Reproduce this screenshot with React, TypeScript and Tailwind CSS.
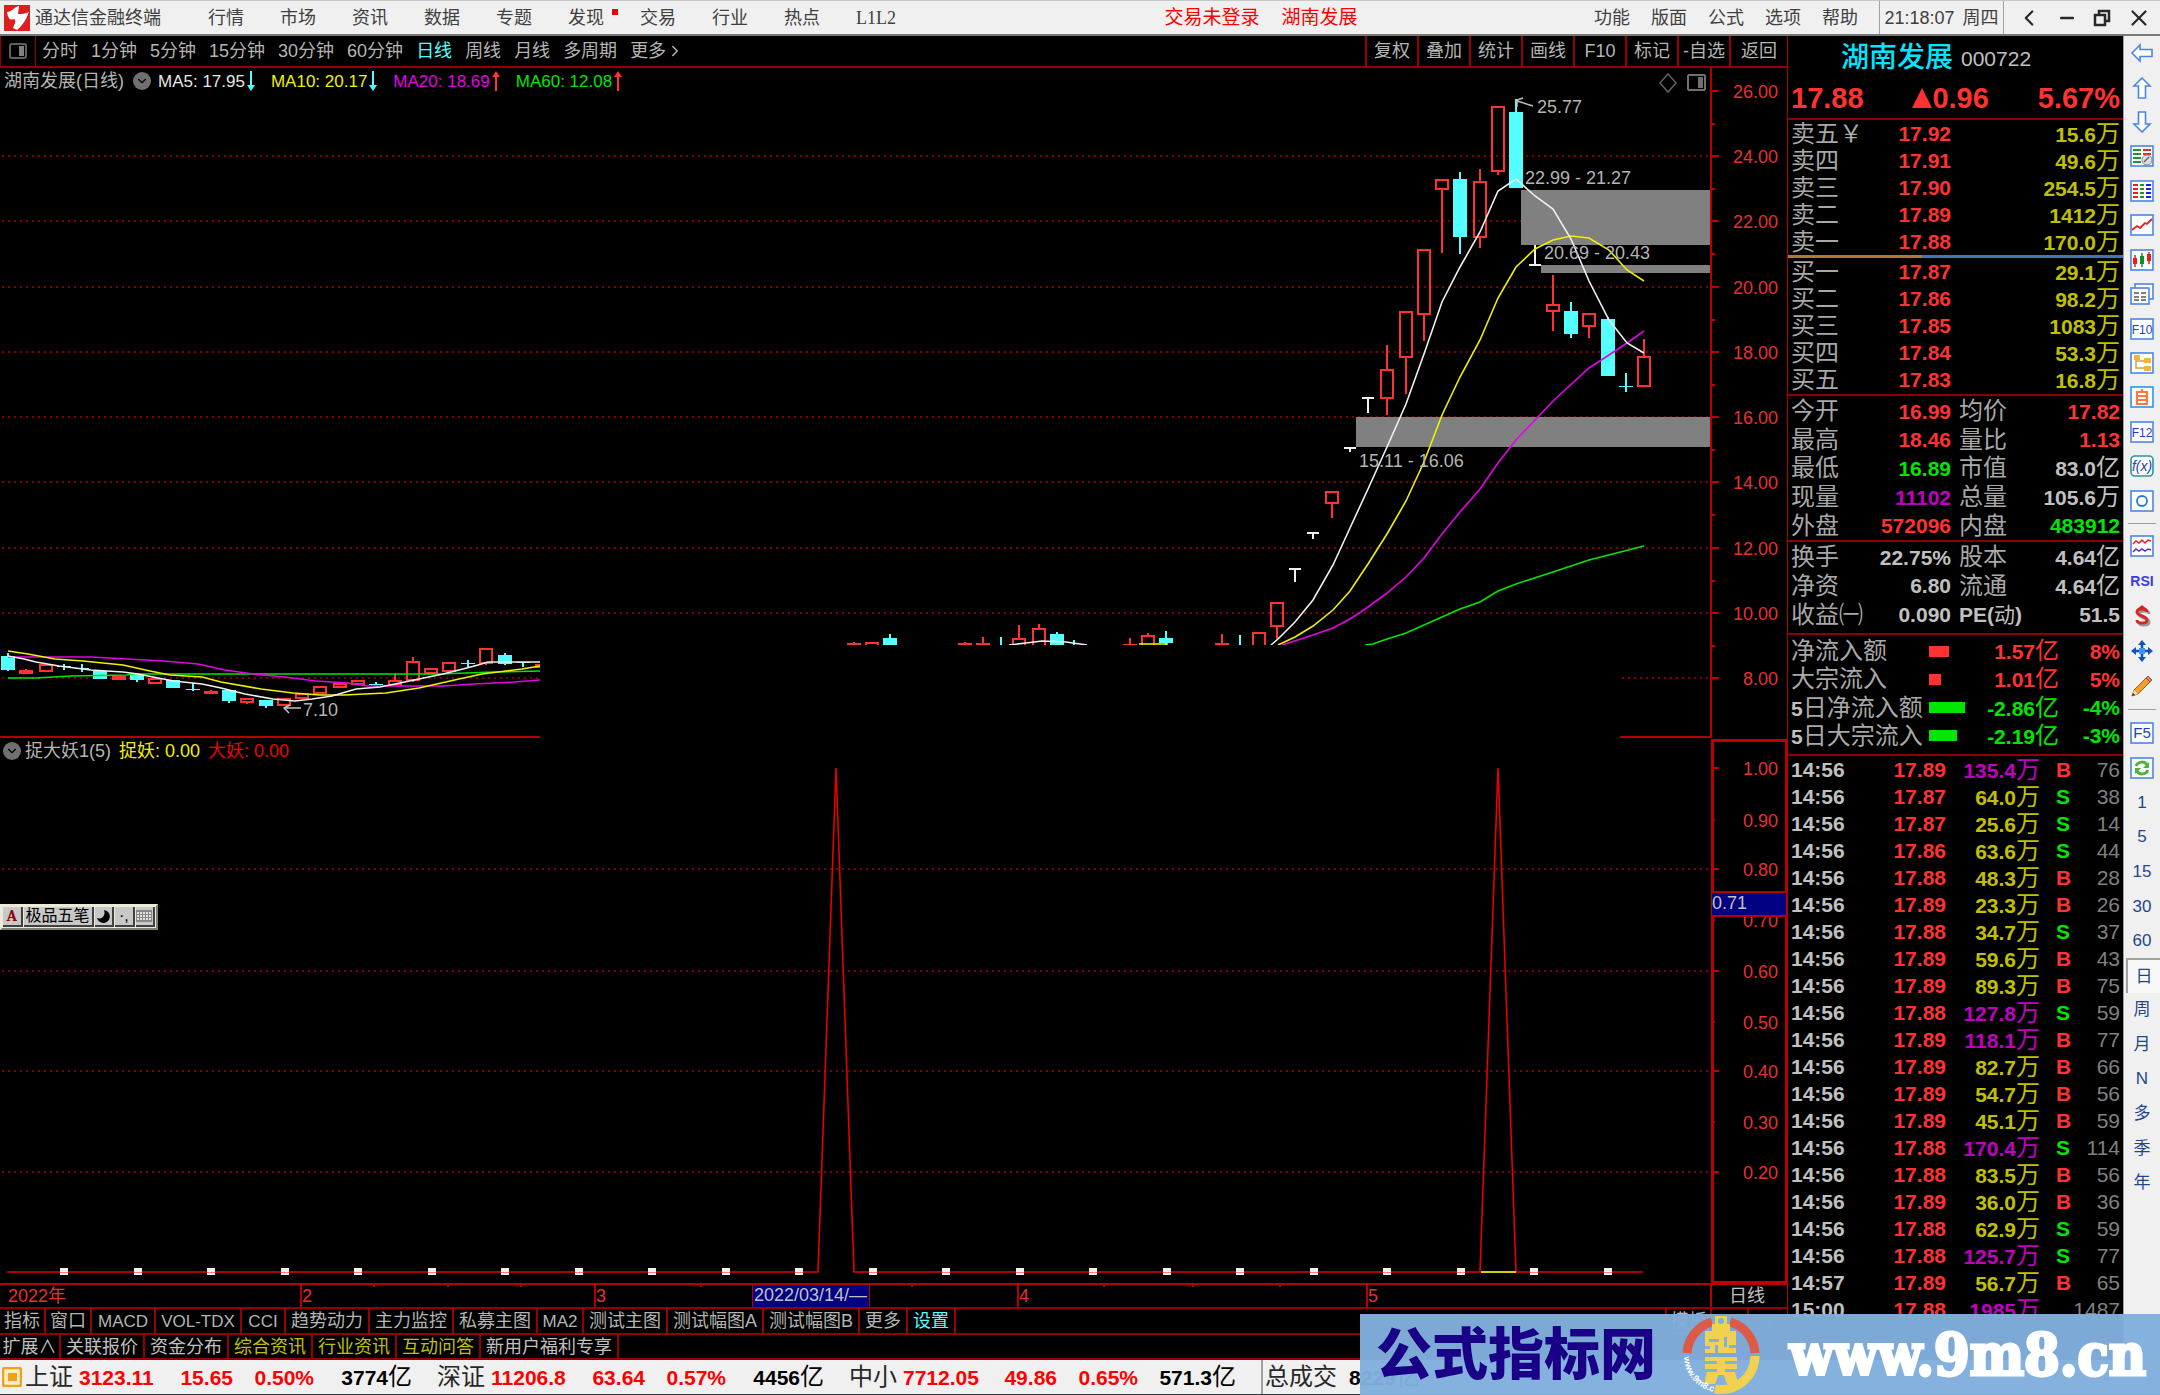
import type { ReactNode } from 'react';
import { ChevronDown, ChevronLeft, ChevronRight, Minus, X } from 'lucide-react';

const menus = ['行情', '市场', '资讯', '数据', '专题', '发现', '交易', '行业', '热点', 'L1L2'];
const rightMenus = ['功能', '版面', '公式', '选项', '帮助'];
const periods = ['分时', '1分钟', '5分钟', '15分钟', '30分钟', '60分钟', '日线', '周线', '月线', '多周期'];
const tools = ['复权', '叠加', '统计', '画线', 'F10', '标记', '-自选', '返回'];

const averages = [
  { text: 'MA5: 17.95', color: 'text-[#e6e6e6]', up: false },
  { text: 'MA10: 20.17', color: 'text-[#f0f000]', up: false },
  { text: 'MA20: 18.69', color: 'text-[#e600e6]', up: true },
  { text: 'MA60: 12.08', color: 'text-[#00e600]', up: true },
];

const asks = [
  ['卖五￥', '17.92', '15.6万'],
  ['卖四', '17.91', '49.6万'],
  ['卖三', '17.90', '254.5万'],
  ['卖二', '17.89', '1412万'],
  ['卖一', '17.88', '170.0万'],
];
const bids = [
  ['买一', '17.87', '29.1万'],
  ['买二', '17.86', '98.2万'],
  ['买三', '17.85', '1083万'],
  ['买四', '17.84', '53.3万'],
  ['买五', '17.83', '16.8万'],
];

const RED = 'text-[#ff3232]';
const GREEN = 'text-[#00e600]';
const PURPLE = 'text-[#c000c0]';
const YELLOW = 'text-[#c0c000]';
const GRAY = 'text-[#c0c0c0]';

const quotes = [
  ['今开', '16.99', RED, '均价', '17.82', RED],
  ['最高', '18.46', RED, '量比', '1.13', RED],
  ['最低', '16.89', GREEN, '市值', '83.0亿', GRAY],
  ['现量', '11102', PURPLE, '总量', '105.6万', GRAY],
  ['外盘', '572096', RED, '内盘', '483912', GREEN],
];
const basics = [
  ['换手', '22.75%', GRAY, '股本', '4.64亿', GRAY],
  ['净资', '6.80', GRAY, '流通', '4.64亿', GRAY],
  ['收益㈠', '0.090', GRAY, 'PE(动)', '51.5', GRAY],
];
const flows = [
  { name: '净流入额', bar: 'w-5 bg-[#ff3232]', value: '1.57亿', pct: '8%', color: RED },
  { name: '大宗流入', bar: 'w-3 bg-[#ff3232]', value: '1.01亿', pct: '5%', color: RED },
  { name: '5日净流入额', bar: 'w-9 bg-[#00e600]', value: '-2.86亿', pct: '-4%', color: GREEN },
  { name: '5日大宗流入', bar: 'w-7 bg-[#00e600]', value: '-2.19亿', pct: '-3%', color: GREEN },
];

const ticks: [string, string, string, string, number][] = [
  ['14:56', '17.89', '135.4万', 'B', 76],
  ['14:56', '17.87', '64.0万', 'S', 38],
  ['14:56', '17.87', '25.6万', 'S', 14],
  ['14:56', '17.86', '63.6万', 'S', 44],
  ['14:56', '17.88', '48.3万', 'B', 28],
  ['14:56', '17.89', '23.3万', 'B', 26],
  ['14:56', '17.88', '34.7万', 'S', 37],
  ['14:56', '17.89', '59.6万', 'B', 43],
  ['14:56', '17.89', '89.3万', 'B', 75],
  ['14:56', '17.88', '127.8万', 'S', 59],
  ['14:56', '17.89', '118.1万', 'B', 77],
  ['14:56', '17.89', '82.7万', 'B', 66],
  ['14:56', '17.89', '54.7万', 'B', 56],
  ['14:56', '17.89', '45.1万', 'B', 59],
  ['14:56', '17.88', '170.4万', 'S', 114],
  ['14:56', '17.88', '83.5万', 'B', 56],
  ['14:56', '17.89', '36.0万', 'B', 36],
  ['14:56', '17.88', '62.9万', 'S', 59],
  ['14:56', '17.88', '125.7万', 'S', 77],
  ['14:57', '17.89', '56.7万', 'B', 65],
  ['15:00', '17.88', '1985万', '', 1487],
];

const tabs = [
  { name: '指标', w: 'w-[46px]' },
  { name: '窗口', w: 'w-[46px]' },
  { name: 'MACD', w: 'w-16' },
  { name: 'VOL-TDX', w: 'w-[86px]' },
  { name: 'CCI', w: 'w-11' },
  { name: '趋势动力', w: 'w-[84px]' },
  { name: '主力监控', w: 'w-[84px]' },
  { name: '私募主图', w: 'w-[84px]' },
  { name: 'MA2', w: 'w-[46px]' },
  { name: '测试主图', w: 'w-[84px]' },
  { name: '测试幅图A', w: 'w-24' },
  { name: '测试幅图B', w: 'w-24' },
  { name: '更多', w: 'w-12' },
  { name: '设置', w: 'w-12' },
];
const links = [
  { name: '扩展∧', w: 'w-[61px]', color: 'text-[#c0c0c0]' },
  { name: '关联报价', w: 'w-[84px]', color: 'text-[#c0c0c0]' },
  { name: '资金分布', w: 'w-[84px]', color: 'text-[#c0c0c0]' },
  { name: '综合资讯', w: 'w-[84px]', color: 'text-[#c0c000]' },
  { name: '行业资讯', w: 'w-[84px]', color: 'text-[#c0c000]' },
  { name: '互动问答', w: 'w-[84px]', color: 'text-[#c0c000]' },
  { name: '新用户福利专享', w: 'w-[138px]', color: 'text-[#c0c0c0]' },
];
const indexes = [
  { name: '上证', price: '3123.11', change: '15.65', pct: '0.50%', amount: '3774亿' },
  { name: '深证', price: '11206.8', change: '63.64', pct: '0.57%', amount: '4456亿' },
  { name: '中小', price: '7712.05', change: '49.86', pct: '0.65%', amount: '571.3亿' },
];

// [type, x, open/close top, bottom, high, low]
type Candle = ['r' | 'c', number, number, number, number, number];
const candles: Candle[] = [
  ['c', 8, 655, 669, 652, 670],
  ['r', 26, 670, 672, 668, 672],
  ['r', 46, 664, 670, 664, 670],
  ['c', 64, 665, 666, 663, 669],
  ['c', 82, 667, 668, 663, 671],
  ['c', 100, 670, 678, 670, 678],
  ['r', 119, 676, 678, 676, 678],
  ['c', 137, 673, 679, 673, 681],
  ['r', 155, 678, 682, 677, 682],
  ['c', 173, 679, 687, 679, 687],
  ['c', 193, 688, 689, 682, 690],
  ['r', 211, 691, 692, 689, 692],
  ['c', 229, 689, 700, 689, 702],
  ['r', 247, 698, 701, 698, 703],
  ['c', 266, 699, 705, 699, 707],
  ['r', 284, 698, 704, 698, 704],
  ['r', 302, 693, 697, 693, 697],
  ['r', 320, 686, 692, 686, 692],
  ['r', 340, 683, 686, 682, 686],
  ['r', 358, 680, 683, 680, 683],
  ['c', 376, 683, 684, 681, 684],
  ['r', 395, 680, 684, 673, 684],
  ['r', 413, 661, 679, 656, 681],
  ['r', 431, 668, 672, 668, 672],
  ['r', 449, 662, 670, 662, 670],
  ['c', 468, 662, 663, 659, 667],
  ['r', 486, 648, 662, 647, 664],
  ['c', 505, 654, 663, 652, 664],
  ['c', 523, 661, 662, 661, 666],
  ['r', 542, 664, 666, 664, 666],
  ['r', 854, 643, 660, 641, 660],
  ['r', 872, 642, 660, 642, 660],
  ['c', 890, 637, 644, 633, 644],
  ['r', 965, 643, 660, 641, 660],
  ['r', 983, 643, 660, 636, 660],
  ['c', 1001, 644, 660, 636, 660],
  ['r', 1019, 638, 660, 624, 660],
  ['r', 1039, 628, 660, 623, 660],
  ['c', 1057, 633, 660, 631, 660],
  ['c', 1074, 644, 660, 639, 660],
  ['r', 1130, 644, 660, 637, 660],
  ['r', 1148, 635, 660, 632, 660],
  ['c', 1166, 637, 642, 630, 644],
  ['r', 1222, 643, 660, 633, 660],
  ['c', 1240, 644, 660, 634, 660],
  ['r', 1259, 632, 660, 632, 660],
  ['r', 1277, 602, 625, 602, 638],
  ['r', 1332, 491, 502, 491, 517],
  ['r', 1387, 369, 397, 344, 414],
  ['r', 1406, 311, 356, 311, 393],
  ['r', 1424, 249, 313, 249, 340],
  ['r', 1442, 179, 188, 179, 252],
  ['c', 1460, 178, 236, 171, 253],
  ['r', 1480, 181, 236, 168, 247],
  ['r', 1498, 106, 170, 106, 174],
  ['c', 1516, 111, 187, 98, 187],
  ['r', 1553, 304, 310, 274, 330],
  ['c', 1571, 310, 333, 301, 337],
  ['r', 1589, 313, 325, 313, 337],
  ['c', 1608, 318, 375, 316, 375],
  ['c', 1626, 385, 386, 372, 391],
  ['r', 1644, 356, 385, 338, 386],
];

const maLines = [
  {
    color: '#00e600',
    points: [
      '8,677 36,677 71,675 127,674 131,673 439,673 494,671 540,670',
      '1365,644 1373,643 1387,638 1406,632 1442,616 1460,608 1480,601 1498,590 1516,583 1553,571 1589,559 1644,545',
    ],
  },
  {
    color: '#e600e6',
    points: [
      '8,656 91,656 127,658 164,660 198,663 225,669 253,673 285,676 316,680 348,682 368,685 443,685 474,683 514,681 540,679',
      '1282,644 1307,636 1333,627 1350,618 1368,606 1387,592 1406,576 1424,557 1442,533 1460,511 1480,488 1498,462 1516,439 1553,400 1589,367 1609,354 1627,342 1644,330',
    ],
  },
  {
    color: '#f0f000',
    points: [
      '8,650 28,653 55,658 83,660 123,664 150,670 170,674 202,676 221,681 261,688 293,692 320,694 344,694 386,692 419,687 459,678 482,673 522,668 540,665',
      '1139,643 1168,643',
      '1278,644 1295,636 1313,625 1333,609 1350,590 1368,563 1387,533 1406,500 1424,461 1442,414 1460,376 1480,339 1498,297 1516,266 1535,248 1553,239 1571,235 1589,237 1609,249 1627,269 1644,280',
    ],
  },
  {
    color: '#f0f0f0',
    points: [
      '8,655 24,658 36,661 59,665 91,669 123,671 138,673 158,677 174,680 202,683 221,687 245,693 273,698 295,700 312,698 332,695 356,688 380,686 395,683 419,678 443,673 463,668 478,664 488,661 540,661',
      '1009,644 1026,642 1042,640 1066,641 1087,644',
      '1271,644 1278,638 1295,621 1313,599 1333,564 1350,527 1368,488 1387,446 1406,403 1424,353 1442,301 1460,266 1480,231 1498,190 1516,178 1535,195 1553,208 1571,238 1589,280 1609,319 1627,342 1644,352',
    ],
  },
];

const prices = [26, 24, 22, 20, 18, 16, 14, 12, 10, 8].map((p, i) => ({
  label: p.toFixed(2),
  y: Math.round(90 + (i * 587) / 9),
}));
const levels = [
  ['1.00', 767],
  ['0.90', 819],
  ['0.80', 868],
  ['0.70', 919],
  ['0.60', 970],
  ['0.50', 1021],
  ['0.40', 1070],
  ['0.30', 1121],
  ['0.20', 1171],
] as const;

const svgText = "'Liberation Sans','Noto Sans CJK SC',sans-serif";

function PriceChart() {
  return (
    <svg viewBox="0 67 1787 670" className="block w-full h-auto" fontFamily={svgText} fontSize="18" shapeRendering="crispEdges">
      {/* 网格与坐标 */}
      {prices.map((p, i) => (
        <g key={p.label}>
          {i > 0 && <path d={`M2 ${p.y}H1711`} stroke="#820000" strokeWidth="2" strokeDasharray="2 4" />}
          <path d={`M1711 ${p.y}h8`} stroke="#c00000" strokeWidth="2" />
          {i < 9 && <path d={`M1711 ${p.y + 33}h4`} stroke="#c00000" strokeWidth="2" />}
          <text x="1778" y={p.y + 7} textAnchor="end" fill="#e63030">{p.label}</text>
        </g>
      ))}

      {/* 缺口 */}
      <rect x="1521" y="189" width="190" height="55" fill="#808080" />
      <rect x="1541" y="264" width="170" height="8" fill="#808080" />
      <rect x="1356" y="416" width="355" height="30" fill="#808080" />

      {candles.map(([type, x, top, bottom, high, low]) =>
        type === 'r' ? (
          <g key={x} stroke="#ff3232" strokeWidth="2" fill="none">
            <path d={`M${x} ${high}V${top}M${x} ${bottom}V${low}`} />
            <rect x={x - 6} y={top} width="12" height={bottom - top} />
          </g>
        ) : (
          <g key={x} fill="#54ffff">
            <rect x={x - 1} y={high} width="2" height={low - high} />
            <rect x={x - 7} y={top} width="14" height={bottom - top} />
          </g>
        )
      )}
      <path
        d="M1289 568h12M1295 568v13M1307 532h12M1313 532v6M1344 447h12M1350 447v4M1362 397h12M1368 397v15M1529 264h12M1535 264v-20"
        stroke="#f0f0f0"
        strokeWidth="2"
      />

      <g fill="none" strokeWidth="1.6" shapeRendering="auto">
        {maLines.map((line) =>
          line.points.map((points) => <polyline key={points} points={points} stroke={line.color} />)
        )}
      </g>

      {/* 遮挡区 */}
      <rect x="540" y="644" width="1080" height="93" fill="#000" />
      <path d="M0 736H540M1620 736H1711" stroke="#b40000" strokeWidth="2" />
      <path d="M1711 67V737" stroke="#b40000" strokeWidth="2" />

      <g fill="#b4b4b4">
        <text x="1537" y="112">25.77</text>
        <text x="1525" y="183">22.99 - 21.27</text>
        <text x="1544" y="258">20.69 - 20.43</text>
        <text x="1359" y="466">15.11 - 16.06</text>
        <text x="303" y="715">7.10</text>
      </g>
      <g stroke="#c0c0c0" strokeWidth="1.5" fill="none" shapeRendering="auto">
        <path d="M1533 105L1517 100M1523 97L1517 99V106" />
        <path d="M301 707H285M289 712L284 707L290 704" />
      </g>
      <path d="M1668 73l8 9-8 9-8-9z" fill="none" stroke="#606060" strokeWidth="1.5" shapeRendering="auto" />
      <rect x="1688" y="74" width="17" height="15" rx="2" fill="none" stroke="#707070" strokeWidth="2" />
      <rect x="1698" y="76" width="5" height="11" fill="#707070" />
    </svg>
  );
}

function SignalChart() {
  return (
    <svg viewBox="0 737 1787 545" className="block w-full h-auto" fontFamily={svgText} fontSize="18" shapeRendering="crispEdges">
      {levels.map(([label, y], i) => (
        <g key={label}>
          {i > 0 && i % 2 === 0 && <path d={`M2 ${y}H1711`} stroke="#820000" strokeWidth="2" strokeDasharray="2 4" />}
          <path d={`M1711 ${y}h${i % 2 === 0 ? 8 : 4}`} stroke="#c00000" strokeWidth="2" />
          <text x="1778" y={y + 7} textAnchor="end" fill="#e63030">{label}</text>
        </g>
      ))}
      <rect x="1712" y="739" width="74" height="542" fill="none" stroke="#c00000" strokeWidth="3" />

      <path
        d="M7 1271H818L836 767L854 1271H1480L1498 767L1516 1271H1643"
        fill="none"
        stroke="#e60000"
        strokeWidth="1.6"
        shapeRendering="auto"
      />
      <path d="M1481 1271H1516" stroke="#d2d200" strokeWidth="2" />
      {Array.from({ length: 22 }, (_, i) => {
        const x = Math.round(60 + i * 73.5);
        return (
          <g key={i}>
            <rect x={x} y="1267" width="8" height="7" fill="#f0f0f0" />
            <path d={`M${x} 1271h8`} stroke="#ff8080" />
          </g>
        );
      })}

      <rect x="1712" y="891" width="74" height="24" fill="#000080" />
      <path d="M1712 891H1786M1712 915H1786" stroke="#b40000" strokeWidth="2" />
      <text x="1712" y="908" fill="#c0c0c0">0.71</text>
    </svg>
  );
}

function DateAxis() {
  const months = [
    ['2', 301],
    ['3', 595],
    ['4', 1018],
    ['5', 1367],
  ] as const;
  return (
    <svg viewBox="0 1282 1787 24" className="block w-full h-auto" fontFamily={svgText} fontSize="18" shapeRendering="crispEdges">
      <path d="M0 1283H1787" stroke="#b40000" strokeWidth="2" />
      <text x="8" y="1301" fill="#e63030">2022年</text>
      {months.map(([label, x]) => (
        <g key={label}>
          <path d={`M${x} 1282V1306`} stroke="#b40000" strokeWidth="2" />
          <text x={x + 1} y="1301" fill="#e63030">{label}</text>
        </g>
      ))}
      <path d="M374 1283v3M448 1283v3M521 1283v3M701 1283v3M912 1283v3M1104 1283v3M1193 1283v3M1280 1283v3" stroke="#b40000" strokeWidth="2" />
      <rect x="752" y="1283" width="117" height="23" fill="#000080" stroke="#b40000" />
      <text x="754" y="1300" fill="#c0c0c0">2022/03/14/—</text>
      <path d="M1711 1282V1306" stroke="#b40000" strokeWidth="2" />
      <text x="1729" y="1301" fill="#c0c0c0">日线</text>
    </svg>
  );
}

// 数字加粗, 汉字单位用常规字重
function Amount({ text }: { text: string }) {
  const unit = /[万亿]$/.test(text) ? text.slice(-1) : '';
  return (
    <>
      {unit ? text.slice(0, -1) : text}
      {unit && <span className="font-normal text-[24px]">{unit}</span>}
    </>
  );
}

function OrderTable({ rows }: { rows: string[][] }) {
  return (
    <table className="w-full table-fixed">
      <tbody>
        {rows.map(([name, price, amount]) => (
          <tr key={name} className="h-[27px]">
            <th className="w-[100px] p-0 text-left font-normal text-[24px] text-[#a8a8a8]">{name}</th>
            <td className="w-[60px] p-0 text-right text-[#ff3232]">{price}</td>
            <td className="p-0 text-right text-[#c0c000]"><Amount text={amount} /></td>
          </tr>
        ))}
      </tbody>
    </table>
  );
}

function QuoteGrid({ rows }: { rows: string[][] }) {
  return (
    <>
      {rows.map(([a, av, ac, b, bv, bc]) => (
        <div key={a} className="flex items-center">
          <div className="flex w-40 items-center justify-between">
            <span className="font-normal text-[24px] text-[#a8a8a8]">{a}</span>
            <span className={ac}>{av}</span>
          </div>
          <div className="flex flex-1 items-center justify-between pl-2">
            {b.startsWith('PE') ? (
              <span className="text-[#c0c0c0]">PE(<span className="font-normal">动</span>)</span>
            ) : (
              <span className="font-normal text-[24px] text-[#a8a8a8]">{b}</span>
            )}
            <span className={bc}><Amount text={bv} /></span>
          </div>
        </div>
      ))}
    </>
  );
}

function QuotePanel() {
  return (
    <aside className="w-[335px] shrink-0 overflow-hidden bg-black text-[21px] leading-none font-bold">
      <header className="h-[84px] border-b-2 border-[#8c0000] px-[3px]">
        <div className="flex h-11 items-center gap-2 pl-[50px]">
          <h1 className="text-[28px] leading-none font-medium text-[#00e6ff]">湖南发展</h1>
          <span className="text-[21px] font-normal text-[#c0c0c0]">000722</span>
        </div>
        <div className="flex h-[36px] items-center justify-between text-[29px] text-[#ff3232]">
          <span>17.88</span>
          <span className="flex items-center">
            <svg viewBox="0 0 20 20" className="h-5 w-5"><path d="M10 0L20 20H0z" fill="#ff3232" /></svg>
            0.96
          </span>
          <span>5.67%</span>
        </div>
      </header>
      <div className="px-[3px]"><OrderTable rows={asks} /></div>
      <div className="flex h-[3px]">
        <div className="w-2/5 bg-[#b4782d]" />
        <div className="flex-1 bg-[#3c78b4]" />
      </div>
      <div className="px-[3px]"><OrderTable rows={bids} /></div>
      <section className="mt-px grid h-[146px] grid-rows-5 border-t-2 border-[#8c0000] px-[3px] pt-px">
        <QuoteGrid rows={quotes} />
      </section>
      <section className="grid h-[93px] grid-rows-3 border-t-2 border-[#8c0000] px-[3px] pt-px pb-1">
        <QuoteGrid rows={basics} />
      </section>
      <section className="grid h-[121px] grid-rows-4 border-t-2 border-[#8c0000] px-[3px] pt-0.5 pb-1">
        {flows.map((f) => (
          <div key={f.name} className={`flex items-center ${f.color}`}>
            <span className="w-[138px] whitespace-nowrap text-[24px] font-normal text-[#a8a8a8]">
              {f.name.startsWith('5') && <span className="text-[21px] font-bold text-[#c0c0c0]">5</span>}
              {f.name.replace('5', '')}
            </span>
            <span className={`h-[11px] ${f.bar}`} />
            <span className="ml-auto w-[90px] text-right"><Amount text={f.value} /></span>
            <span className="w-[61px] text-right">{f.pct}</span>
          </div>
        ))}
      </section>
      <div className="border-t-2 border-[#8c0000] px-[3px]">
        <table className="w-full table-fixed">
          <tbody>
            {ticks.map(([time, price, amount, side, count], i) => (
              <tr key={i} className="h-[27px]">
                <td className="w-20 p-0 text-[#c0c0c0]">{time}</td>
                <td className="w-[75px] p-0 text-right text-[#ff3232]">{price}</td>
                <td className={`w-[94px] p-0 text-right ${parseFloat(amount) > 100 ? PURPLE : YELLOW}`}>
                  <Amount text={amount} />
                </td>
                <td className={`w-8 p-0 pl-4 ${side === 'B' ? RED : GREEN}`}>{side}</td>
                <td className="p-0 text-right font-normal text-[#808080]">{count}</td>
              </tr>
            ))}
          </tbody>
        </table>
      </div>
    </aside>
  );
}

function Box({ children, color = '#4a86e8' }: { children?: ReactNode; color?: string }) {
  return (
    <svg viewBox="0 0 24 22" className="h-[22px] w-6" fill="none">
      <rect x="1" y="1" width="22" height="20" fill="#fff" stroke={color} strokeWidth="1.6" />
      {children}
    </svg>
  );
}

function BoxText({ text }: { text: string }) {
  return (
    <Box>
      <text x="12" y="16" textAnchor="middle" fontSize={text.length > 2 ? 12 : 15} fill="#1e3cc8" fontFamily={svgText}>{text}</text>
    </Box>
  );
}

function Arrow({ rotate }: { rotate: string }) {
  return (
    <svg viewBox="0 0 24 24" className={`h-6 w-6 ${rotate}`}>
      <path d="M2 12L10 4V8.500H22V15.500H10V20z" fill="#fff" stroke="#4a86e8" strokeWidth="1.6" />
    </svg>
  );
}

const topIcons: [string, ReactNode][] = [
  ['后退', <Arrow rotate="rotate-0" />],
  ['上一只', <Arrow rotate="rotate-90" />],
  ['下一只', <Arrow rotate="-rotate-90" />],
  ['报价', <Box>
    <path d="M3 5h8M3 9h8M3 13h8M3 17h8" stroke="#1e9632" strokeWidth="2" />
    <path d="M13 5h8M13 9h8" stroke="#e62828" strokeWidth="2" />
    <circle cx="17" cy="15" r="5" fill="#ddd" stroke="#888" />
    <path d="M14 17l5-5" stroke="#666" strokeWidth="1.5" />
  </Box>],
  ['多股', <Box>
    <path d="M3 5h5M3 9h5M3 13h5M3 17h5" stroke="#e61e1e" strokeWidth="2" />
    <path d="M10 5h4M10 9h4M10 13h4M10 17h4" stroke="#1e961e" strokeWidth="2" />
    <path d="M16 5h5M16 9h5M16 13h5M16 17h5" stroke="#1e1ee6" strokeWidth="2" />
  </Box>],
  ['分时图', <Box><path d="M2 16L7 12L10 14L15 9L17 10L22 5" stroke="#e61e1e" strokeWidth="1.8" /></Box>],
  ['K线图', <Box>
    <path d="M5 6v12M19 3v12" stroke="#e61e1e" strokeWidth="1.5" />
    <path d="M12 4v14" stroke="#148c28" strokeWidth="1.5" />
    <rect x="3" y="9" width="4" height="6" fill="#e61e1e" />
    <rect x="10" y="7" width="4" height="8" fill="#148c28" />
    <rect x="17" y="5" width="4" height="7" fill="#e61e1e" />
  </Box>],
  ['资料', <svg viewBox="0 0 24 22" className="h-[22px] w-6" fill="#fff" stroke="#4a86e8" strokeWidth="1.6">
    <rect x="5" y="1" width="18" height="15" />
    <rect x="1" y="5" width="18" height="16" />
    <path d="M4 10h5M11 10h5M4 14h5M11 14h5M4 17h5M11 17h5" stroke="#555" />
  </svg>],
  ['F10', <BoxText text="F10" />],
  ['板块', <Box>
    <path d="M6 6V16H14M6 9H14" stroke="#dca03c" strokeWidth="1.5" />
    <rect x="4" y="3" width="6" height="5" fill="#f0b43c" />
    <rect x="14" y="6" width="7" height="5" fill="#f0b43c" />
    <rect x="14" y="14" width="7" height="5" fill="#f0b43c" />
  </Box>],
  ['自选', <Box color="#2896f0">
    <path d="M12 3V6M7 6H17V18H7zM7 10H17M7 14H17" stroke="#ff783c" strokeWidth="2.200" />
  </Box>],
  ['F12', <BoxText text="F12" />],
  ['公式', <svg viewBox="0 0 24 22" className="h-[22px] w-6">
    <rect x="1" y="1" width="22" height="20" rx="4" fill="#fff" stroke="#289696" strokeWidth="1.6" />
    <text x="12" y="16" textAnchor="middle" fontSize="14" fontStyle="italic" fill="#1e3cc8" fontFamily={svgText}>f(x)</text>
  </svg>],
  ['区间', <Box><circle cx="12" cy="11" r="5" stroke="#2878d2" strokeWidth="1.8" /></Box>],
];

const midIcons: [string, ReactNode][] = [
  ['叠加', <Box>
    <path d="M3 9L6 6L9 8L12 5L15 8L18 5L21 6" stroke="#e61e1e" strokeWidth="1.5" />
    <path d="M3 17L6 14L9 16L12 14L15 16L18 14L21 15" stroke="#5a28dc" strokeWidth="1.5" />
  </Box>],
  ['RSI', <span className="text-[14px] font-bold text-[#3c3cdc]">RSI</span>],
  ['资金', <svg viewBox="0 0 24 24" className="h-6 w-6" fill="none" strokeWidth="3">
    <path d="M19 10C19 6 9 6 9 10S19 14 19 18S9 22 9 18" stroke="#999" />
    <path d="M17 8C17 4 7 4 7 8S17 12 17 16S7 20 7 16" stroke="#d22828" />
    <path d="M7 5L12 1L17 5z" fill="#d22828" />
  </svg>],
  ['移动', <svg viewBox="0 0 24 24" className="h-6 w-6" fill="#1450b4">
    <path d="M12 1l4 5H8zM12 23l4-5H8zM1 12l5-4v8zM23 12l-5-4v8z" />
    <path d="M12 5v14M5 12h14" stroke="#1450b4" strokeWidth="2.500" />
    <rect x="9" y="9" width="6" height="6" fill="#3c96f0" />
  </svg>],
  ['画笔', <svg viewBox="0 0 24 24" className="h-6 w-6">
    <path d="M2 22L4 16L16 4L20 8L8 20z" fill="#f0a028" stroke="#96601e" />
    <path d="M16 4L18 2L22 6L20 8z" fill="#e67878" stroke="#a05050" />
    <path d="M2 22L4 16L8 20z" fill="#f5dcb4" />
    <path d="M2 22l1-3 2 2z" fill="#222" />
  </svg>],
];

const lowIcons: [string, ReactNode][] = [
  ['F5', <BoxText text="F5" />],
  ['刷新', <Box>
    <path d="M6 9C8 4 15 4 17 8M18 13C16 18 9 18 7 14" stroke="#50b43c" strokeWidth="3" />
    <path d="M19 5V11H13zM5 17V11H11z" fill="#50b43c" />
  </Box>],
];
const periodKeys = ['1', '5', '15', '30', '60', '日', '周', '月', 'N', '多', '季', '年'];

function IconBar() {
  const cell = 'flex min-h-0 items-center justify-center';
  return (
    <nav className="w-[37px] shrink-0 overflow-hidden border-l border-[#a0a0a0] bg-[#f0f0f0] text-[#1e468c]">
      <div className="grid h-[482px] auto-rows-fr">
        {topIcons.map(([label, icon]) => (
          <button key={label} aria-label={label} className={cell}>{icon}</button>
        ))}
      </div>
      <div className="mx-1 my-[5px] h-px bg-[#a0a0a0]" />
      <div className="grid h-[174px] auto-rows-fr">
        {midIcons.map(([label, icon]) => (
          <button key={label} aria-label={label} className={cell}>{icon}</button>
        ))}
      </div>
      <div className="mx-1 my-[6px] h-px bg-[#a0a0a0]" />
      <div className="grid h-[484px] auto-rows-fr text-[17px]">
        {lowIcons.map(([label, icon]) => (
          <button key={label} aria-label={label} className={cell}>{icon}</button>
        ))}
        {periodKeys.map((key) => (
          <button
            key={key}
            className={`${cell} ${key === '日' ? 'ml-0.5 border-l-2 border-t-2 border-[#a0a0a0] bg-[#f8f8f8]' : ''}`}
          >
            {key}
          </button>
        ))}
      </div>
    </nav>
  );
}

function CircleDown() {
  return (
    <button aria-label="展开" className="flex h-[18px] w-[18px] items-center justify-center rounded-full bg-[#707070] text-black">
      <ChevronDown size={14} />
    </button>
  );
}

function InputMethodBar() {
  const key = 'flex h-5 items-center justify-center border-r-2 border-b-2 border-[#404040] bg-[#c8c8c8]';
  return (
    <div className="absolute left-0 top-[836px] flex w-[158px] items-center gap-px border-2 border-[#ece9d8] border-r-[#808070] border-b-[#808070] bg-[#ece9d8] p-px text-black">
      <button className={`${key} w-5 font-serif text-[16px] font-bold text-[#8c0000]`}>A</button>
      <button className={`${key} w-[72px] text-[16px]`}>极品五笔</button>
      <button aria-label="半角" className={`${key} w-5`}>
        <svg viewBox="0 0 14 14" className="h-3.5 w-3.5"><path d="M8 1A6.500 6.500 0 1 1 1 9C6 11 10 6 8 1z" /></svg>
      </button>
      <button className={`${key} w-5 text-[16px]`}>·,</button>
      <button aria-label="软键盘" className={`${key} w-5`}>
        <svg viewBox="0 0 16 14" className="h-3.5 w-4">
          <rect y="1" width="16" height="12" fill="#888" />
          <path d="M1 4h14M1 7h14M1 10h14" stroke="#fff" strokeWidth="1.5" strokeDasharray="2 1" />
        </svg>
      </button>
    </div>
  );
}

function Banner() {
  return (
    <div className="absolute bottom-0 right-0 flex h-[81px] w-[800px] items-center bg-[#80aedd]/97 pl-4">
      <span className="w-[305px] whitespace-nowrap text-[56px] leading-none font-black text-[#1a0087]">公式指标网</span>
      <svg viewBox="0 0 80 80" className="h-20 w-20 shrink-0">
        <path d="M6 38A34 34 0 0 1 31 7M49 7A34 34 0 0 1 74 38" fill="none" stroke="#dc5a46" strokeWidth="9" />
        <path d="M74 41A34 34 0 0 1 34 74" fill="none" stroke="#f0d250" strokeWidth="9" />
        <g fill="#f0d250">
          <path d="M34 1h12v8h3v7h6v22H24V16h7V9h3z" />
          <path d="M24 42h12v4H24zM44 42h12v4H44zM24 49h12v5H24zM44 49h12v5H44zM36 42h8v18h-8z" />
          <path d="M26 57h11v4l-3 8H24v-5zM54 57H43v4l3 8h10v-5z" />
        </g>
        <circle cx="40" cy="6" r="3" fill="#80aedd" />
        <path d="M28 24h10v3H28zM43 22h3v10h-3zM34 30h3v8h-3zM48 30h7v3h-7zM24 31h5v3h-5z" fill="#80aedd" />
        <path id="ring" d="M3 42A37 37 0 0 0 34 77" fill="none" />
        <text fontSize="9" fontWeight="bold" fill="#fff" fontFamily={svgText}>
          <textPath href="#ring">www.9m8.cn</textPath>
        </text>
      </svg>
      <span className="ml-auto mr-3.5 font-['DejaVu_Serif_Condensed','DejaVu_Serif',serif] text-[57px] leading-none font-bold text-white [-webkit-text-stroke:3px_white]">
        www.9m8.cn
      </span>
    </div>
  );
}

export default function App() {
  return (
    <div className="relative flex min-h-screen w-full flex-col overflow-hidden bg-black font-['Liberation_Sans','Noto_Sans_CJK_SC',sans-serif] text-[18px] leading-none text-[#b4b4b4]">
      {/* 菜单栏 */}
      <header className="flex h-9 items-center border-t border-b-2 border-t-[#c8c8c8] border-b-[#787878] bg-[#f0f0f0] text-[#404040]">
        <svg viewBox="0 0 26 26" className="ml-1 h-[26px] w-[26px]">
          <rect width="26" height="26" fill="#dc1e1e" />
          <path d="M3 7C8 7 10 2 15 1L14 9C18 9 21 9 25 7C22 15 18 21 13 25L9 23C10 20 13 16 10 14C6 16 4 13 3 7z" fill="#fff" />
        </svg>
        <span className="ml-[5px] w-[173px] whitespace-nowrap">通达信金融终端</span>
        <nav className="flex">
          {menus.map((m) => (
            <button key={m} className={`relative w-[72px] text-left whitespace-nowrap ${m === 'L1L2' ? "font-['Liberation_Serif',serif]" : ''}`}>
              {m}
              {m === '发现' && <span className="absolute left-11 top-0 h-1.5 w-1.5 bg-red-600" />}
            </button>
          ))}
        </nav>
        <div className="flex flex-1 justify-center gap-[22px] text-[19px] text-[#ff0000]">
          <button>交易未登录</button>
          <button>湖南发展</button>
        </div>
        <nav className="flex">
          {rightMenus.map((m) => (
            <button key={m} className="w-[57px] text-left">{m}</button>
          ))}
        </nav>
        <div className="flex h-full w-[125px] items-center justify-center gap-2 border-x border-[#a0a0a0] whitespace-nowrap">
          <time>21:18:07</time>
          <span>周四</span>
        </div>
        <div className="flex w-[156px] items-center justify-around pl-1 text-[#282828]">
          <button aria-label="后退"><ChevronLeft size={26} /></button>
          <button aria-label="最小化"><Minus size={20} strokeWidth={3} /></button>
          <button aria-label="还原">
            <svg viewBox="0 0 18 18" className="h-[18px] w-[18px]" fill="none" stroke="#282828" strokeWidth="2.500">
              <path d="M6 5V2H16V12H13" />
              <rect x="2" y="6" width="10" height="10" />
            </svg>
          </button>
          <button aria-label="关闭"><X size={26} /></button>
        </div>
      </header>

      <div className="flex">
        <main className="min-w-0 flex-1 border-r border-[#b40000]">
          {/* 周期栏 */}
          <div className="flex h-8 items-center border-b-2 border-[#960000] whitespace-nowrap">
            <button aria-label="侧栏" className="flex h-full w-9 items-center justify-center border-x border-[#960000]">
              <svg viewBox="0 0 18 18" className="h-[18px] w-[18px]">
                <rect x="1" y="2" width="16" height="14" rx="2" fill="none" stroke="#606060" strokeWidth="2" />
                <rect x="10" y="4" width="5" height="10" fill="#808080" />
              </svg>
            </button>
            <div className="flex flex-1 gap-[13px] pl-1.5">
              {periods.map((p) => (
                <button key={p} className={p === '日线' ? 'text-[#54ffff]' : ''}>{p}</button>
              ))}
              <button className="flex items-center">更多<ChevronRight size={18} /></button>
            </div>
            {tools.map((t) => (
              <button key={t} className="h-full w-[52px] border-l-2 border-[#960000] last:w-[58px]">{t}</button>
            ))}
          </div>

          <div className="relative">
            <div className="absolute left-1 top-0 z-10 flex h-[26px] items-center whitespace-nowrap">
              <span className="w-[129px]">湖南发展(日线)</span>
              <CircleDown />
              <div className="ml-[7px] flex gap-4 text-[17px]">
                {averages.map((a) => (
                  <span key={a.text} className={`flex items-center gap-0.5 ${a.color}`}>
                    {a.text}
                    <svg viewBox="0 0 8 20" className={`h-5 w-2 ${a.up ? '' : 'rotate-180'}`}>
                      <path d="M4 0L8 6H5V20H3V6H0z" fill={a.up ? '#ff3232' : '#54ffff'} />
                    </svg>
                  </span>
                ))}
              </div>
            </div>
            <PriceChart />
            <div className="relative">
              <div className="absolute left-[3px] top-0 z-10 flex h-[26px] items-center gap-2 whitespace-nowrap">
                <CircleDown />
                <span className="-ml-1">捉大妖1(5)</span>
                <span className="text-[#f0f000]">捉妖: 0.00</span>
                <span className="text-[#f00000]">大妖: 0.00</span>
              </div>
              <SignalChart />
            </div>
            <InputMethodBar />
          </div>
          <DateAxis />

          <div className="flex h-[26px] border-t-2 border-[#960000] whitespace-nowrap">
            {tabs.map((t) => (
              <button
                key={t.name}
                className={`border-r-2 border-[#960000] ${t.w} ${/^[A-Z]/.test(t.name) ? 'text-[17px]' : ''} ${t.name === '设置' ? 'text-[#54ffff]' : ''}`}
              >
                {t.name}
              </button>
            ))}
            <button className="ml-auto w-[47px] border-x-2 border-[#960000]">模板</button>
            <button className="w-[37px] border-r-2 border-[#960000]">+</button>
            <button className="w-[38px]">-</button>
          </div>
          <div className="flex h-[27px] border-y-2 border-[#960000] whitespace-nowrap">
            {links.map((l) => (
              <a key={l.name} href="#" className={`flex items-center justify-center border-r-2 border-[#960000] ${l.w} ${l.color}`}>
                {l.name}
              </a>
            ))}
          </div>
        </main>
        <QuotePanel />
        <IconBar />
      </div>

      {/* 指数栏 */}
      <footer className="flex h-[35px] items-center border-b border-[#283c50] bg-[#f0f0f0] text-[21px] font-bold whitespace-nowrap text-black">
        <div className="flex w-[25px] shrink-0 items-center pl-0.5">
          <svg viewBox="0 0 20 20" className="h-5 w-5">
            <rect x="1" y="1" width="18" height="18" rx="2" fill="#fff0c0" stroke="#f0a01e" strokeWidth="2.500" />
            <rect x="6" y="6" width="9" height="8" fill="#f0a01e" />
          </svg>
        </div>
        {indexes.map((x) => (
          <div key={x.name} className="flex w-[412px] shrink-0 items-center text-[#ff0000]">
            <span className="w-[54px] text-[24px] font-normal text-[#282828]">{x.name}</span>
            <span className="w-[78px]">{x.price}</span>
            <span className="w-[76px] text-right">{x.change}</span>
            <span className="w-[81px] text-right">{x.pct}</span>
            <span className="w-[98px] text-right text-black"><Amount text={x.amount} /></span>
          </div>
        ))}
        <div className="flex h-full items-center gap-3 border-l-2 border-[#a0a0a0] pl-0.5">
          <span className="text-[24px] font-normal text-[#282828]">总成交</span>
          <span><Amount text="8229亿" /></span>
        </div>
      </footer>

      <Banner />
    </div>
  );
}
